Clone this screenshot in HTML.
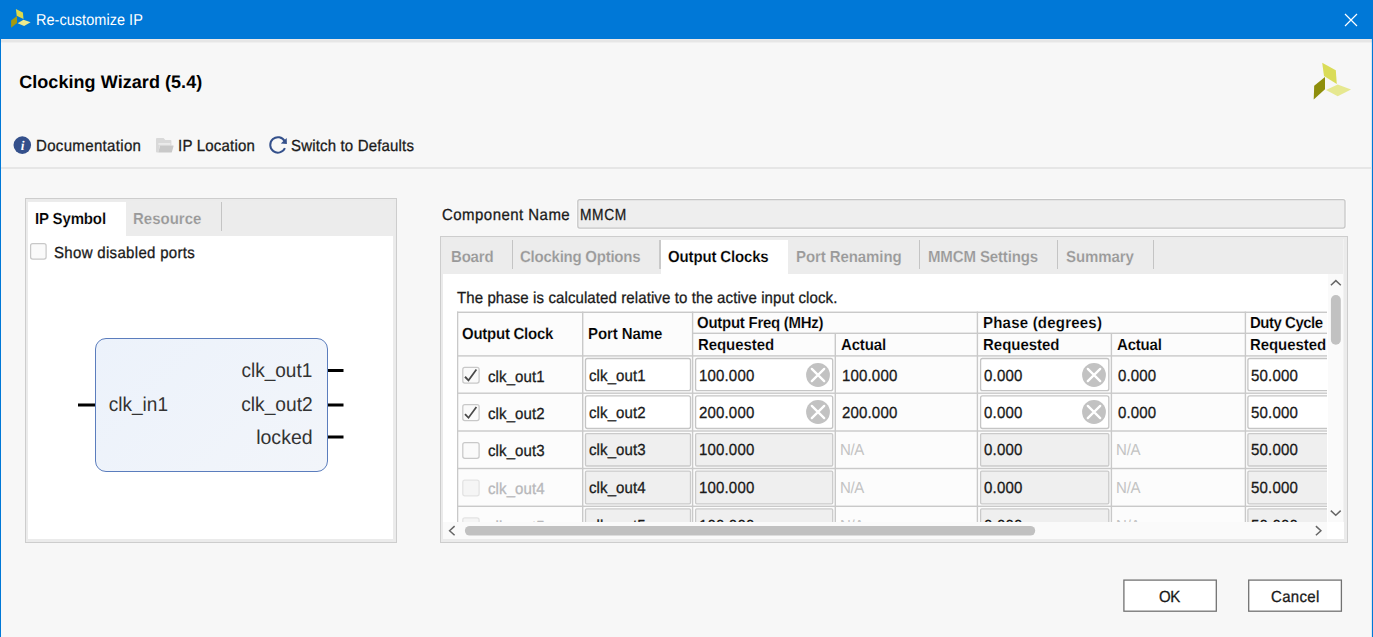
<!DOCTYPE html>
<html>
<head>
<meta charset="utf-8">
<title>Re-customize IP</title>
<style>
*{box-sizing:border-box;margin:0;padding:0}
html,body{width:1373px;height:637px;overflow:hidden}
body{position:relative;background:#f7f7f7;font-family:"Liberation Sans",sans-serif;font-size:16px;color:#1a1a1a;text-rendering:geometricPrecision}
.abs{position:absolute}
.t{position:absolute;white-space:nowrap;line-height:1;transform-origin:0 0}
.r{-webkit-text-stroke:0.3px currentColor}
#titlebar{left:0;top:0;width:1373px;height:39px;background:#0078d7}
#tbshadow{left:1px;top:39px;width:1371px;height:4px;background:linear-gradient(#ece9e7 25%,#e6e6e6 25%,#e6e6e6 75%,#efefef 75%)}
#bl{left:0;top:0;width:1px;height:637px;background:#0078d7}
#br{left:1371px;top:0;width:2px;height:637px;background:linear-gradient(90deg,rgba(0,120,215,0.12) 50%,#0078d7 50%)}
#sep{left:1px;top:167px;width:1371px;height:2px;background:#e6e6e6}
.panel{position:absolute;border:1px solid #cdcdcd;background:#fff}
.tabbar{position:absolute;background:#ececec}
.tabsep{position:absolute;width:1px;background:#c4c4c4}
#tv{left:457px;top:311px;width:870px;height:211px;overflow:hidden;background:#fcfcfc}
</style>
</head>
<body>
<div id="titlebar" class="abs"></div>
<div id="tbshadow" class="abs"></div>
<div id="bl" class="abs"></div>
<div id="br" class="abs"></div>
<svg class="abs" style="left:0;top:0" width="40" height="39" viewBox="0 0 40 39">
 <polygon points="15.9,9.1 22.9,12.5 23.5,18.9 16.7,15.8" fill="#ddd94c"/>
 <polygon points="17,16.1 17,22.9 11.1,27.7 11.1,20.4" fill="#a39a10"/>
 <polygon points="17.6,23.2 23.5,19.8 30.6,22.3 24.1,26" fill="#eeea8c"/>
</svg>
<svg class="abs" style="left:1343px;top:12px" width="16" height="16" viewBox="0 0 16 16"><path d="M2 2 L14 14 M14 2 L2 14" stroke="#fff" stroke-width="1.2" fill="none"/></svg>
<svg class="abs" style="left:1300px;top:50px" width="64" height="60" viewBox="1300 50 64 60">
 <polygon points="1322.2,62.7 1335.8,70.3 1336.8,84 1324,76" fill="#dadc58"/>
 <polygon points="1325,76.9 1325,89.2 1313.7,99.5 1314.2,85.8" fill="#8e8e0c"/>
 <polygon points="1326,90.1 1337.7,84.4 1351,89.6 1337.7,96.2" fill="#e6e890"/>
</svg>

<div class="t " style="left:35.8px;top:13.0px;font-size:15.75px;letter-spacing:0.04px;color:#fff;transform:scaleX(0.92);">Re-customize IP</div>
<div class="t " style="left:19.2px;top:73.0px;font-size:18px;letter-spacing:0.06px;font-weight:bold;color:#000;">Clocking Wizard (5.4)</div>
<svg class="abs" style="left:13px;top:136px" width="19" height="19" viewBox="0 0 19 19">
 <circle cx="9.3" cy="9.1" r="8.8" fill="#34508b"/>
 <text x="9.6" y="14" font-family="Liberation Serif" font-style="italic" font-weight="bold" font-size="13.5" fill="#fff" text-anchor="middle">i</text>
</svg>
<svg class="abs" style="left:150px;top:132px" width="30" height="26" viewBox="150 132 30 26">
 <path d="M156 139.1 Q156 138.1 157 138.1 L163.6 138.1 L165.3 140 L170.5 140 Q171.4 140 171.4 141 L171.4 145.6 L159.8 145.6 L158.2 152.4 L157 152.4 Q156 152.4 156 151.4 Z" fill="#d9d9d9"/>
 <rect x="158.4" y="143.3" width="12" height="1.3" fill="#f3f3f3"/>
 <path d="M160.1 145.4 L173.2 145.4 Q173.8 145.4 173.6 146 L171.9 151.9 Q171.7 152.5 171.1 152.5 L158.2 152.5 Z" fill="#c9c9c9"/>
</svg>
<svg class="abs" style="left:264px;top:132px" width="30" height="26" viewBox="264 132 30 26">
 <path d="M284.94 148.18 A7.7 7.7 0 1 1 284.71 141.23" fill="none" stroke="#34508b" stroke-width="2"/>
 <path d="M286.7 138.0 L286.9 143.9 L280.8 143.6 Z" fill="#34508b"/>
</svg>
<div id="sep" class="abs"></div>
<div class="t r" style="left:35.6px;top:139.0px;font-size:16px;letter-spacing:0.36px;transform:scaleX(0.9375);">Documentation</div>
<div class="t r" style="left:177.9px;top:139.0px;font-size:16px;letter-spacing:0.23px;transform:scaleX(0.9375);">IP Location</div>
<div class="t r" style="left:291.3px;top:139.0px;font-size:16px;letter-spacing:0.18px;transform:scaleX(0.9375);">Switch to Defaults</div>
<div class="panel" style="left:25px;top:198px;width:372px;height:345px;box-shadow:inset 2px 3px 0 #ebebeb,inset -3px -3px 0 #ebebeb"></div>
<div class="tabbar" style="left:28px;top:201px;width:365px;height:35px"></div>
<div class="abs" style="left:28px;top:202px;width:98px;height:34px;background:#fff"></div>
<div class="tabsep" style="left:221px;top:202px;height:29px"></div>

<svg class="abs" style="left:28px;top:241px" width="24" height="24" viewBox="28 241 24 24"><rect x="30.60" y="243.70" width="15.50" height="15.40" rx="2.1" fill="#fafafa" stroke="#c8c8c8" stroke-width="1.25"/></svg>
<div class="t " style="left:35.3px;top:212.0px;font-size:16px;letter-spacing:-0.16px;font-weight:bold;-webkit-text-stroke:0.15px #fff;color:#000;transform:scaleX(0.9375);">IP Symbol</div>
<div class="t " style="left:133.2px;top:212.0px;font-size:16px;letter-spacing:0.0px;font-weight:bold;-webkit-text-stroke:0.15px #ececec;color:#999;transform:scaleX(0.9375);">Resource</div>
<div class="t r" style="left:54.3px;top:246.0px;font-size:16px;letter-spacing:0.34px;transform:scaleX(0.9375);">Show disabled ports</div>
<div class="abs" style="left:95px;top:338px;width:233px;height:134px;border:1px solid #5b7dbd;border-radius:11px;background:linear-gradient(135deg,#ecf2fb,#f2f5fa)"></div>
<svg class="abs" style="left:70px;top:330px" width="290" height="150" viewBox="70 330 290 150">
 <rect x="78" y="403.5" width="17" height="3" fill="#000"/>
 <rect x="328" y="369" width="15.5" height="3" fill="#000"/>
 <rect x="328" y="403.5" width="15.5" height="3" fill="#000"/>
 <rect x="328" y="435.5" width="15.5" height="3" fill="#000"/>
 <g font-family="Liberation Sans" font-size="20" fill="#333" lengthAdjust="spacingAndGlyphs">
  <text x="108.7" y="411" textLength="59.4" lengthAdjust="spacingAndGlyphs">clk_in1</text>
  <text x="241.4" y="377" textLength="70.9" lengthAdjust="spacingAndGlyphs">clk_out1</text>
  <text x="241.2" y="411" textLength="71.5" lengthAdjust="spacingAndGlyphs">clk_out2</text>
  <text x="256.2" y="443.6" textLength="56.4" lengthAdjust="spacingAndGlyphs">locked</text>
 </g>
</svg>
<div class="t r" style="left:441.6px;top:208.0px;font-size:16px;letter-spacing:0.49px;transform:scaleX(0.9375);">Component Name</div>
<svg class="abs" style="left:570px;top:194px" width="785" height="40" viewBox="570 194 785 40"><rect x="576.6" y="198.5" width="769.6" height="30.7" rx="3" fill="none" stroke="#fbfbfb" stroke-width="1"/><rect x="577.8" y="199.7" width="767.2" height="28.3" rx="2" fill="#eeeeee" stroke="#c6c6c6" stroke-width="1.25"/></svg>
<div class="t r" style="left:580.3px;top:208.0px;font-size:16px;letter-spacing:0.7px;transform:scaleX(0.86);">MMCM</div>
<div class="panel" style="left:440px;top:236px;width:908px;height:307px;box-shadow:inset 2px 3px 0 #ebebeb,inset -3px -3px 0 #ebebeb"></div>
<div class="tabbar" style="left:443px;top:239px;width:902px;height:35px"></div>
<div class="abs" style="left:661px;top:240px;width:127px;height:34px;background:#fff"></div>
<div class="tabsep" style="left:512px;top:240px;height:29px"></div>
<div class="tabsep" style="left:659px;top:240px;height:29px;width:2px;background:#c9c9c9"></div>
<div class="tabsep" style="left:919px;top:240px;height:29px"></div>
<div class="tabsep" style="left:1057px;top:240px;height:29px"></div>
<div class="tabsep" style="left:1153px;top:240px;height:29px"></div>
<div class="t " style="left:450.6px;top:250.0px;font-size:16px;letter-spacing:-0.21px;font-weight:bold;-webkit-text-stroke:0.15px #ececec;color:#999;transform:scaleX(0.9375);">Board</div>
<div class="t " style="left:520.1px;top:250.0px;font-size:16px;letter-spacing:-0.26px;font-weight:bold;-webkit-text-stroke:0.15px #ececec;color:#999;transform:scaleX(0.9375);">Clocking Options</div>
<div class="t " style="left:667.6px;top:250.0px;font-size:16px;letter-spacing:-0.16px;font-weight:bold;-webkit-text-stroke:0.15px #fff;color:#000;transform:scaleX(0.9375);">Output Clocks</div>
<div class="t " style="left:795.8px;top:250.0px;font-size:16px;letter-spacing:-0.09px;font-weight:bold;-webkit-text-stroke:0.15px #ececec;color:#999;transform:scaleX(0.9375);">Port Renaming</div>
<div class="t " style="left:928.0px;top:250.0px;font-size:16px;letter-spacing:-0.13px;font-weight:bold;-webkit-text-stroke:0.15px #ececec;color:#999;transform:scaleX(0.9375);">MMCM Settings</div>
<div class="t " style="left:1066.2px;top:250.0px;font-size:16px;letter-spacing:-0.1px;font-weight:bold;-webkit-text-stroke:0.15px #ececec;color:#999;transform:scaleX(0.9375);">Summary</div>
<div class="t r" style="left:456.8px;top:291.0px;font-size:16px;letter-spacing:0.11px;transform:scaleX(0.9375);">The phase is calculated relative to the active input clock.</div>
<div id="tv" class="abs">
<svg class="abs" style="left:0;top:0" width="870" height="211" viewBox="457 311 870 211"><g fill="#c9c9c9"><rect x="456.90" y="311.6" width="1.4" height="230"/><rect x="582.00" y="311.6" width="1.4" height="230"/><rect x="691.90" y="311.6" width="1.4" height="230"/><rect x="976.70" y="311.6" width="1.4" height="230"/><rect x="1244.70" y="311.6" width="1.4" height="230"/><rect x="834.60" y="333.3" width="1.4" height="230"/><rect x="1110.70" y="333.3" width="1.4" height="230"/><rect x="457" y="311.60" width="900" height="1.4"/><rect x="457" y="355.20" width="900" height="1.4"/><rect x="457" y="392.50" width="900" height="1.4"/><rect x="457" y="430.30" width="900" height="1.4"/><rect x="457" y="467.80" width="900" height="1.4"/><rect x="457" y="505.60" width="900" height="1.4"/><rect x="692.6" y="332.60" width="700" height="1.4"/></g></svg>
<div class="t " style="left:4.6px;top:16.0px;font-size:16px;letter-spacing:-0.27px;font-weight:bold;-webkit-text-stroke:0.15px #fcfcfc;color:#000;transform:scaleX(0.9375);">Output Clock</div>
<div class="t " style="left:131.2px;top:16.0px;font-size:16px;letter-spacing:-0.08px;font-weight:bold;-webkit-text-stroke:0.15px #fcfcfc;color:#000;transform:scaleX(0.9375);">Port Name</div>
<div class="t " style="left:240.4px;top:5.0px;font-size:16px;letter-spacing:-0.28px;font-weight:bold;-webkit-text-stroke:0.15px #fcfcfc;color:#000;transform:scaleX(0.9375);">Output Freq (MHz)</div>
<div class="t " style="left:241.0px;top:27.0px;font-size:16px;letter-spacing:-0.08px;font-weight:bold;-webkit-text-stroke:0.15px #fcfcfc;color:#000;transform:scaleX(0.9375);">Requested</div>
<div class="t " style="left:384.2px;top:27.0px;font-size:16px;letter-spacing:-0.17px;font-weight:bold;-webkit-text-stroke:0.15px #fcfcfc;color:#000;transform:scaleX(0.9375);">Actual</div>
<div class="t " style="left:525.6px;top:5.0px;font-size:16px;letter-spacing:0.23px;font-weight:bold;-webkit-text-stroke:0.15px #fcfcfc;color:#000;transform:scaleX(0.9375);">Phase (degrees)</div>
<div class="t " style="left:525.6px;top:27.0px;font-size:16px;letter-spacing:-0.02px;font-weight:bold;-webkit-text-stroke:0.15px #fcfcfc;color:#000;transform:scaleX(0.9375);">Requested</div>
<div class="t " style="left:660.3px;top:27.0px;font-size:16px;letter-spacing:-0.22px;font-weight:bold;-webkit-text-stroke:0.15px #fcfcfc;color:#000;transform:scaleX(0.9375);">Actual</div>
<div class="t " style="left:793.3px;top:5.0px;font-size:16px;letter-spacing:-0.52px;font-weight:bold;-webkit-text-stroke:0.15px #fcfcfc;color:#000;transform:scaleX(0.9375);">Duty Cycle</div>
<div class="t " style="left:793.3px;top:27.0px;font-size:16px;letter-spacing:-0.08px;font-weight:bold;-webkit-text-stroke:0.15px #fcfcfc;color:#000;transform:scaleX(0.9375);">Requested</div>
<svg class="abs" style="left:3px;top:53px" width="24" height="24" viewBox="460 364 24 24"><rect x="462.80" y="367.40" width="16.30" height="15.80" rx="2.1" fill="#fafafa" stroke="#c8c8c8" stroke-width="1.25"/><path d="M464.30 377.50 L465.70 376.10 L468.40 379.10 L475.70 369.10 L477.10 370.10 L468.60 381.80Z" fill="#4a4a4a"/></svg>
<div class="t r" style="left:30.5px;top:59.0px;font-size:16px;letter-spacing:0.12px;transform:scaleX(0.9375);">clk_out1</div>
<svg class="abs" style="left:126px;top:44px" width="111" height="42" viewBox="583 355 111 42"><rect x="585.50" y="358.50" width="105.00" height="32.20" rx="2" fill="#ffffff" stroke="#c5c5c5" stroke-width="1.3"/></svg>
<div class="t r" style="left:131.7px;top:58.0px;font-size:16px;letter-spacing:0.12px;transform:scaleX(0.9375);">clk_out1</div>
<svg class="abs" style="left:236px;top:44px" width="143" height="42" viewBox="693 355 143 42"><rect x="695.60" y="358.50" width="137.10" height="32.20" rx="2" fill="#ffffff" stroke="#c5c5c5" stroke-width="1.3"/></svg>
<div class="t r" style="left:242.0px;top:58.0px;font-size:16px;letter-spacing:0.18px;transform:scaleX(0.9375);">100.000</div>
<svg class="abs" style="left:521px;top:44px" width="134" height="42" viewBox="978 355 134 42"><rect x="980.60" y="358.50" width="128.20" height="32.20" rx="2" fill="#ffffff" stroke="#c5c5c5" stroke-width="1.3"/></svg>
<div class="t r" style="left:526.6px;top:58.0px;font-size:16px;letter-spacing:0.21px;transform:scaleX(0.9375);">0.000</div>
<svg class="abs" style="left:788px;top:44px" width="138" height="42" viewBox="1245 355 138 42"><rect x="1247.90" y="358.50" width="132.10" height="32.20" rx="2" fill="#ffffff" stroke="#c5c5c5" stroke-width="1.3"/></svg>
<div class="t r" style="left:794.0px;top:58.0px;font-size:16px;letter-spacing:0.21px;transform:scaleX(0.9375);">50.000</div>
<svg class="abs" style="left:348.6px;top:51.8px" width="24" height="24" viewBox="0 0 24 24"><circle cx="12" cy="12" r="11.9" fill="#c2c2c2"/><path d="M5.8 5.9 L18.2 18.1 M18.2 5.9 L5.8 18.1" stroke="#fff" stroke-width="2.3" stroke-linecap="round" fill="none"/></svg>
<svg class="abs" style="left:624.9px;top:51.8px" width="24" height="24" viewBox="0 0 24 24"><circle cx="12" cy="12" r="11.9" fill="#c2c2c2"/><path d="M5.8 5.9 L18.2 18.1 M18.2 5.9 L5.8 18.1" stroke="#fff" stroke-width="2.3" stroke-linecap="round" fill="none"/></svg>
<div class="t r" style="left:385.2px;top:58.0px;font-size:16px;letter-spacing:0.18px;transform:scaleX(0.9375);">100.000</div>
<div class="t r" style="left:660.6px;top:58.0px;font-size:16px;letter-spacing:0.16px;transform:scaleX(0.9375);">0.000</div>
<svg class="abs" style="left:3px;top:91px" width="24" height="24" viewBox="460 402 24 24"><rect x="462.80" y="404.70" width="16.30" height="15.80" rx="2.1" fill="#fafafa" stroke="#c8c8c8" stroke-width="1.25"/><path d="M464.30 414.80 L465.70 413.40 L468.40 416.40 L475.70 406.40 L477.10 407.40 L468.60 419.10Z" fill="#4a4a4a"/></svg>
<div class="t r" style="left:30.5px;top:96.0px;font-size:16px;letter-spacing:0.12px;transform:scaleX(0.9375);">clk_out2</div>
<svg class="abs" style="left:126px;top:82px" width="111" height="42" viewBox="583 393 111 42"><rect x="585.50" y="395.80" width="105.00" height="32.70" rx="2" fill="#ffffff" stroke="#c5c5c5" stroke-width="1.3"/></svg>
<div class="t r" style="left:131.7px;top:95.0px;font-size:16px;letter-spacing:0.12px;transform:scaleX(0.9375);">clk_out2</div>
<svg class="abs" style="left:236px;top:82px" width="143" height="42" viewBox="693 393 143 42"><rect x="695.60" y="395.80" width="137.10" height="32.70" rx="2" fill="#ffffff" stroke="#c5c5c5" stroke-width="1.3"/></svg>
<div class="t r" style="left:242.0px;top:95.0px;font-size:16px;letter-spacing:0.18px;transform:scaleX(0.9375);">200.000</div>
<svg class="abs" style="left:521px;top:82px" width="134" height="42" viewBox="978 393 134 42"><rect x="980.60" y="395.80" width="128.20" height="32.70" rx="2" fill="#ffffff" stroke="#c5c5c5" stroke-width="1.3"/></svg>
<div class="t r" style="left:526.6px;top:95.0px;font-size:16px;letter-spacing:0.21px;transform:scaleX(0.9375);">0.000</div>
<svg class="abs" style="left:788px;top:82px" width="138" height="42" viewBox="1245 393 138 42"><rect x="1247.90" y="395.80" width="132.10" height="32.70" rx="2" fill="#ffffff" stroke="#c5c5c5" stroke-width="1.3"/></svg>
<div class="t r" style="left:794.0px;top:95.0px;font-size:16px;letter-spacing:0.21px;transform:scaleX(0.9375);">50.000</div>
<svg class="abs" style="left:348.6px;top:89.4px" width="24" height="24" viewBox="0 0 24 24"><circle cx="12" cy="12" r="11.9" fill="#c2c2c2"/><path d="M5.8 5.9 L18.2 18.1 M18.2 5.9 L5.8 18.1" stroke="#fff" stroke-width="2.3" stroke-linecap="round" fill="none"/></svg>
<svg class="abs" style="left:624.9px;top:89.4px" width="24" height="24" viewBox="0 0 24 24"><circle cx="12" cy="12" r="11.9" fill="#c2c2c2"/><path d="M5.8 5.9 L18.2 18.1 M18.2 5.9 L5.8 18.1" stroke="#fff" stroke-width="2.3" stroke-linecap="round" fill="none"/></svg>
<div class="t r" style="left:385.2px;top:95.0px;font-size:16px;letter-spacing:0.18px;transform:scaleX(0.9375);">200.000</div>
<div class="t r" style="left:660.6px;top:95.0px;font-size:16px;letter-spacing:0.16px;transform:scaleX(0.9375);">0.000</div>
<svg class="abs" style="left:3px;top:128px" width="24" height="24" viewBox="460 439 24 24"><rect x="462.80" y="442.50" width="16.30" height="15.80" rx="2.1" fill="#fafafa" stroke="#c8c8c8" stroke-width="1.25"/></svg>
<div class="t r" style="left:30.5px;top:133.0px;font-size:16px;letter-spacing:0.12px;transform:scaleX(0.9375);">clk_out3</div>
<svg class="abs" style="left:126px;top:120px" width="111" height="42" viewBox="583 431 111 42"><rect x="585.50" y="433.60" width="105.00" height="32.40" rx="1.2" fill="#efefef" stroke="#cacaca" stroke-width="1.3"/></svg>
<div class="t r" style="left:131.7px;top:132.0px;font-size:16px;letter-spacing:0.12px;transform:scaleX(0.9375);">clk_out3</div>
<svg class="abs" style="left:236px;top:120px" width="143" height="42" viewBox="693 431 143 42"><rect x="695.60" y="433.60" width="137.10" height="32.40" rx="1.2" fill="#efefef" stroke="#cacaca" stroke-width="1.3"/></svg>
<div class="t r" style="left:242.0px;top:132.0px;font-size:16px;letter-spacing:0.18px;transform:scaleX(0.9375);">100.000</div>
<svg class="abs" style="left:521px;top:120px" width="134" height="42" viewBox="978 431 134 42"><rect x="980.60" y="433.60" width="128.20" height="32.40" rx="1.2" fill="#efefef" stroke="#cacaca" stroke-width="1.3"/></svg>
<div class="t r" style="left:526.6px;top:132.0px;font-size:16px;letter-spacing:0.21px;transform:scaleX(0.9375);">0.000</div>
<svg class="abs" style="left:788px;top:120px" width="138" height="42" viewBox="1245 431 138 42"><rect x="1247.90" y="433.60" width="132.10" height="32.40" rx="1.2" fill="#efefef" stroke="#cacaca" stroke-width="1.3"/></svg>
<div class="t r" style="left:794.0px;top:132.0px;font-size:16px;letter-spacing:0.21px;transform:scaleX(0.9375);">50.000</div>
<div class="t " style="left:383.2px;top:132.0px;font-size:16px;letter-spacing:-0.42px;color:#c3c3c3;transform:scaleX(0.9375);">N/A</div>
<div class="t " style="left:659.1px;top:132.0px;font-size:16px;letter-spacing:-0.22px;color:#c3c3c3;transform:scaleX(0.9375);">N/A</div>
<svg class="abs" style="left:3px;top:166px" width="24" height="24" viewBox="460 477 24 24"><rect x="462.80" y="480.00" width="16.30" height="15.80" rx="2.1" fill="#f5f5f5" stroke="#e3e3e3" stroke-width="1.25"/></svg>
<div class="t r" style="left:30.5px;top:171.0px;font-size:16px;letter-spacing:0.12px;color:#b7b7ba;transform:scaleX(0.9375);">clk_out4</div>
<svg class="abs" style="left:126px;top:157px" width="111" height="42" viewBox="583 468 111 42"><rect x="585.50" y="471.10" width="105.00" height="32.70" rx="1.2" fill="#efefef" stroke="#cacaca" stroke-width="1.3"/></svg>
<div class="t r" style="left:131.7px;top:170.0px;font-size:16px;letter-spacing:0.12px;transform:scaleX(0.9375);">clk_out4</div>
<svg class="abs" style="left:236px;top:157px" width="143" height="42" viewBox="693 468 143 42"><rect x="695.60" y="471.10" width="137.10" height="32.70" rx="1.2" fill="#efefef" stroke="#cacaca" stroke-width="1.3"/></svg>
<div class="t r" style="left:242.0px;top:170.0px;font-size:16px;letter-spacing:0.18px;transform:scaleX(0.9375);">100.000</div>
<svg class="abs" style="left:521px;top:157px" width="134" height="42" viewBox="978 468 134 42"><rect x="980.60" y="471.10" width="128.20" height="32.70" rx="1.2" fill="#efefef" stroke="#cacaca" stroke-width="1.3"/></svg>
<div class="t r" style="left:526.6px;top:170.0px;font-size:16px;letter-spacing:0.21px;transform:scaleX(0.9375);">0.000</div>
<svg class="abs" style="left:788px;top:157px" width="138" height="42" viewBox="1245 468 138 42"><rect x="1247.90" y="471.10" width="132.10" height="32.70" rx="1.2" fill="#efefef" stroke="#cacaca" stroke-width="1.3"/></svg>
<div class="t r" style="left:794.0px;top:170.0px;font-size:16px;letter-spacing:0.21px;transform:scaleX(0.9375);">50.000</div>
<div class="t " style="left:383.2px;top:170.0px;font-size:16px;letter-spacing:-0.42px;color:#c3c3c3;transform:scaleX(0.9375);">N/A</div>
<div class="t " style="left:659.1px;top:170.0px;font-size:16px;letter-spacing:-0.22px;color:#c3c3c3;transform:scaleX(0.9375);">N/A</div>
<svg class="abs" style="left:3px;top:204px" width="24" height="24" viewBox="460 515 24 24"><rect x="462.80" y="517.80" width="16.30" height="15.80" rx="2.1" fill="#f5f5f5" stroke="#e3e3e3" stroke-width="1.25"/></svg>
<div class="t r" style="left:30.5px;top:209.0px;font-size:16px;letter-spacing:0.12px;color:#b7b7ba;transform:scaleX(0.9375);">clk_out5</div>
<svg class="abs" style="left:126px;top:195px" width="111" height="42" viewBox="583 506 111 42"><rect x="585.50" y="508.90" width="105.00" height="32.40" rx="1.2" fill="#efefef" stroke="#cacaca" stroke-width="1.3"/></svg>
<div class="t r" style="left:131.7px;top:208.0px;font-size:16px;letter-spacing:0.12px;transform:scaleX(0.9375);">clk_out5</div>
<svg class="abs" style="left:236px;top:195px" width="143" height="42" viewBox="693 506 143 42"><rect x="695.60" y="508.90" width="137.10" height="32.40" rx="1.2" fill="#efefef" stroke="#cacaca" stroke-width="1.3"/></svg>
<div class="t r" style="left:242.0px;top:208.0px;font-size:16px;letter-spacing:0.18px;transform:scaleX(0.9375);">100.000</div>
<svg class="abs" style="left:521px;top:195px" width="134" height="42" viewBox="978 506 134 42"><rect x="980.60" y="508.90" width="128.20" height="32.40" rx="1.2" fill="#efefef" stroke="#cacaca" stroke-width="1.3"/></svg>
<div class="t r" style="left:526.6px;top:208.0px;font-size:16px;letter-spacing:0.21px;transform:scaleX(0.9375);">0.000</div>
<svg class="abs" style="left:788px;top:195px" width="138" height="42" viewBox="1245 506 138 42"><rect x="1247.90" y="508.90" width="132.10" height="32.40" rx="1.2" fill="#efefef" stroke="#cacaca" stroke-width="1.3"/></svg>
<div class="t r" style="left:794.0px;top:208.0px;font-size:16px;letter-spacing:0.21px;transform:scaleX(0.9375);">50.000</div>
<div class="t " style="left:383.2px;top:208.0px;font-size:16px;letter-spacing:-0.42px;color:#c3c3c3;transform:scaleX(0.9375);">N/A</div>
<div class="t " style="left:659.1px;top:208.0px;font-size:16px;letter-spacing:-0.22px;color:#c3c3c3;transform:scaleX(0.9375);">N/A</div>
</div>
<div class="abs" style="left:1328px;top:274px;width:15px;height:248px;background:#fafafa"></div>
<div class="abs" style="left:1343px;top:239px;width:4px;height:303px;background:linear-gradient(90deg,#f2f2f2 25%,#ebebeb 25%)"></div>
<div class="abs" style="left:443px;top:522px;width:884px;height:17px;background:#fafafa"></div>
<div class="abs" style="left:441px;top:539px;width:906px;height:3px;background:#ebebeb"></div>
<div class="abs" style="left:1327px;top:522px;width:17px;height:17px;background:#fff"></div>
<svg class="abs" style="left:1325px;top:274px" width="22" height="250" viewBox="1325 274 22 250">
 <rect x="1330.9" y="295.1" width="9.9" height="49.6" rx="4.95" fill="#c1c1c1"/>
 <path d="M1330.9 285.2 L1335.85 280.6 L1340.8 285.2" fill="none" stroke="#666" stroke-width="1.5"/>
 <path d="M1330.8 510.6 L1335.75 515.2 L1340.7 510.6" fill="none" stroke="#666" stroke-width="1.5"/>
</svg>
<svg class="abs" style="left:443px;top:520px" width="890" height="22" viewBox="443 520 890 22">
 <rect x="464.9" y="525.9" width="570.3" height="9.7" rx="4.85" fill="#c1c1c1"/>
 <path d="M1315.9 526.1 L1320.9 530.7 L1315.9 535.3" fill="none" stroke="#666" stroke-width="1.5"/>
 <path d="M454.6 526.1 L449.6 530.7 L454.6 535.3" fill="none" stroke="#666" stroke-width="1.5"/>
</svg>
<svg class="abs" style="left:1115px;top:572px" width="240" height="48" viewBox="1115 572 240 48">
 <rect x="1123.9" y="580.1" width="92.4" height="31.1" fill="#fff" stroke="#727272" stroke-width="1.3"/>
 <rect x="1248.7" y="580.1" width="92.7" height="31.1" fill="#fff" stroke="#727272" stroke-width="1.3"/>
</svg>
<div class="t r" style="left:1159.4px;top:590.0px;font-size:16px;letter-spacing:-0.43px;transform:scaleX(0.9375);">OK</div>
<div class="t r" style="left:1270.8px;top:590.0px;font-size:16px;letter-spacing:0.34px;transform:scaleX(0.9375);">Cancel</div>
</body>
</html>
